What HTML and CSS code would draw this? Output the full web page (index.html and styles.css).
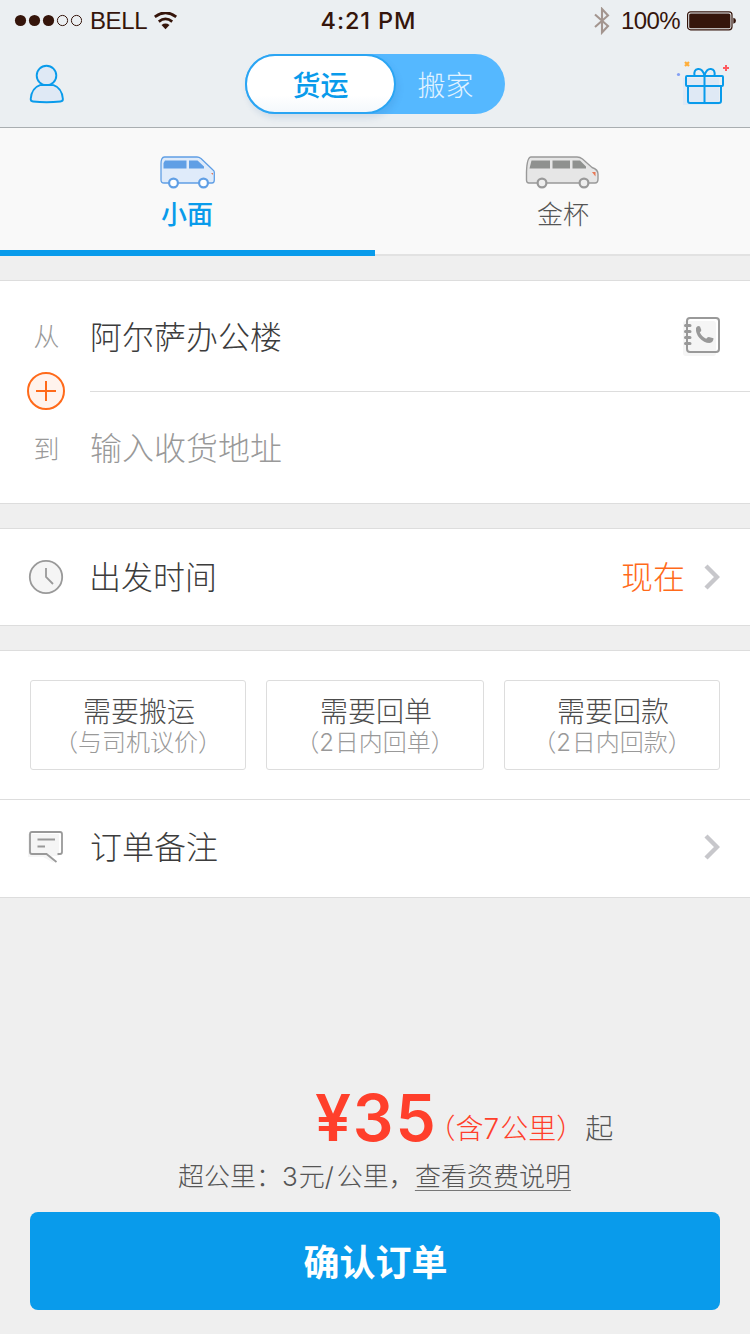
FILE: index.html
```html
<!DOCTYPE html>
<html lang="zh-CN">
<head>
<meta charset="utf-8">
<title>货运</title>
<link rel="stylesheet" href="styles.css">
</head>
<body>
<header class="header">
  <div class="status">
    <div class="status-left">
      <svg class="dots" width="68" height="14" viewBox="0 0 68 14"><g fill="#35150b"><circle cx="6.5" cy="6.500" r="5.6"/><circle cx="20.5" cy="6.500" r="5.6"/><circle cx="34.5" cy="6.500" r="5.6"/></g><g fill="none" stroke="#35150b"><circle cx="48.5" cy="6.500" r="5.1"/><circle cx="62.5" cy="6.500" r="5.1"/></g></svg>
      <span class="carrier">BELL</span>
      <svg class="wifi" width="24" height="18" viewBox="0 0 24 18"><path d="M.8 4.800Q11.500-3.200 22.200 4.800" fill="none" stroke="#35150b" stroke-width="2.800"/><path d="M4.800 9.600Q11.500 4.200 18.200 9.600" fill="none" stroke="#35150b" stroke-width="2.700"/><path d="M7.500 13Q11.500 10.200 15.500 13L11.500 17.300Z" fill="#35150b"/></svg>
    </div>
    <span class="time">4:21 PM</span>
    <div class="status-right">
      <svg class="bt" width="16" height="28" viewBox="0 0 16 28"><path d="M1 7.500 14 19 8 25.500V2L14 8.500 1 20" fill="none" stroke="#a3958f" stroke-width="2.100"/></svg>
      <span class="percent">100%</span>
      <svg class="battery" width="50" height="20" viewBox="0 0 50 20"><rect x=".6" y=".8" width="44.400" height="18" rx="3" fill="none" stroke="#35150b" stroke-width="1.200"/><rect x="2.200" y="2.400" width="41.200" height="14.800" rx="1.500" fill="#35150b"/><path d="M46.300 6.800Q49 7.500 49 9.800T46.300 12.800Z" fill="#35150b"/></svg>
    </div>
  </div>
  <div class="nav">
    <svg class="user" width="38" height="40" viewBox="0 0 38 40"><g fill="#dfe9f5" stroke="#099beb" stroke-width="1.900"><circle cx="18.500" cy="11.500" r="9.800"/><path d="M12 21.100Q3.500 24 2.700 35Q2.600 37.200 5 37.500Q18.500 39 32.400 37.500Q35 37.200 34.900 35Q34 24 25.500 21.100Q18.500 20.800 12 21.100Z"/></g></svg>
    <div class="toggle"><span class="toggle-on">货运</span><span class="toggle-off">搬家</span></div>
    <svg class="gift" width="54" height="44" viewBox="0 0 54 44"><rect x="7" y="17" width="36" height="27" fill="#dfe9f5"/><g fill="none" stroke="#099beb" stroke-width="2"><rect x="10" y="15" width="37" height="10" rx="1"/><path d="M12 25V40Q12 42 14 42H43Q45 42 45 40V25M28.500 15V42M28.500 14.500Q26.500 7.500 22 8T18.500 15M28.500 14.500Q30.500 7.500 35 8T38.500 15"/></g><path d="M9 1 13 5M13 1 9 5" stroke="#ffad38" stroke-width="2.200"/><path d="M50 4v6M47 7h6" stroke="#ff5a5f" stroke-width="2"/><circle cx="2.500" cy="13.500" r="1.600" fill="#84a0f5"/></svg>
  </div>
</header>

<nav class="tabs">
  <div class="tab tab-active">
    <svg width="56" height="34" viewBox="0 0 56 34"><path d="M5.500 2H38Q40 2 42 3.500L54 15Q55.500 16 55.300 18V25Q55.300 28 53 28H5Q2 28 2 25V9Q2 2 5.500 2Z" fill="#dfebfa" stroke="#609fe5" stroke-width="1.300"/><path d="M6 5.500H27.500V13.500H4.500V8ZM30 5.500H38.500L45 11.500V13.500H30Z" fill="#609fe5"/><path d="M52 18H54V20Z" fill="#e87754"/><g fill="#fff" stroke="#609fe5" stroke-width="2.200"><circle cx="14.500" cy="28" r="4.400"/><circle cx="44.500" cy="28" r="4.400"/></g></svg>
    <span>小面</span>
  </div>
  <div class="tab">
    <svg width="74" height="34" viewBox="0 0 74 34"><path d="M6 2H52Q55 2 57.500 4L67 12.500Q73 14.500 73 19V24Q73 28 70 28H4Q1.500 28 1.500 25V17Q2 2 6 2Z" fill="#e6e6e6" stroke="#999" stroke-width="1.400"/><path d="M6.500 5.500H25V13.500H4.500ZM27.500 5.500H45V13.500H27.500ZM47.500 5.500H55L61 11.500V13.500H47.500Z" fill="#8f918f"/><path d="M67 17H70.500V21.500Z" fill="#e87754"/><g fill="#eee" stroke="#999" stroke-width="2.200"><circle cx="17" cy="28" r="4.400"/><circle cx="59" cy="28" r="4.400"/></g></svg>
    <span>金杯</span>
  </div>
</nav>

<section class="card route">
  <svg class="plus" width="38" height="38" viewBox="0 0 38 38"><circle cx="19" cy="19" r="18" fill="#fff3ed" stroke="#ff6a1a" stroke-width="2"/><path d="M19 9V29M9 19H29" stroke="#ff6a1a" stroke-width="2"/></svg>
  <div class="row row-from">
    <span class="mark">从</span>
    <span class="label">阿尔萨办公楼</span>
    <svg class="book" width="38" height="40" viewBox="0 0 38 40"><rect x="1" y="5" width="33" height="35" rx="3" fill="#f5f5f5"/><rect x="5" y="2" width="32" height="34" rx="3" fill="none" stroke="#999" stroke-width="2"/><path d="M3.500 9.500H8M3.500 15.500H8M3.500 21.500H8M3.500 27.500H8" stroke="#999" stroke-width="3" stroke-linecap="round"/><path d="M14 12Q15.500 9 18 10.500L19.300 14Q19.500 15.300 17.800 16.200Q19.500 20.500 24.200 22.800Q25.300 21 26.700 21L31.500 22.300Q31.500 26.500 27.500 27Q22 27 17.500 22Q13.500 17.500 14 12Z" fill="#999"/></svg>
  </div>
  <div class="row row-to">
    <span class="mark">到</span>
    <span class="label placeholder">输入收货地址</span>
  </div>
</section>

<section class="card row depart">
  <span class="mark"><svg width="36" height="36" viewBox="0 0 36 36"><circle cx="18" cy="18" r="16.200" fill="#f5f5f5" stroke="#999" stroke-width="1.800"/><path d="M18 9V18L25 25" fill="none" stroke="#999" stroke-width="1.800"/></svg></span>
  <span class="label">出发时间</span>
  <span class="value">现在</span>
  <svg class="chevron" width="16" height="26" viewBox="0 0 16 26"><path d="M2 2 13 13 2 24" fill="none" stroke="#c7c7cb" stroke-width="4.400"/></svg>
</section>

<section class="card">
  <div class="options">
    <div class="option"><b>需要搬运</b><span>（与司机议价）</span></div>
    <div class="option"><b>需要回单</b><span>（<i>2</i>日内回单）</span></div>
    <div class="option"><b>需要回款</b><span>（<i>2</i>日内回款）</span></div>
  </div>
  <div class="row note">
    <span class="mark"><svg width="38" height="34" viewBox="0 0 38 34"><path d="M1 5H32V27H25L27 34L16 28H1Z" fill="#f5f5f5"/><path d="M30.500 25H33Q35 25 35 23V5Q35 3 33 3H5Q3 3 3 5V23Q3 25 5 25H19.500L29.500 33M10.500 10.500H28M10.500 17.500H18" fill="none" stroke="#999" stroke-width="1.800"/></svg></span>
    <span class="label">订单备注</span>
    <svg class="chevron" width="16" height="26" viewBox="0 0 16 26"><path d="M2 2 13 13 2 24" fill="none" stroke="#c7c7cb" stroke-width="4.400"/></svg>
  </div>
</section>

<footer class="footer">
  <div class="price"><span class="amount">¥35</span><span class="included">（含<i>7</i>公里）</span><span class="from">起</span></div>
  <div class="rate">超公里：<i>3</i>元<i class="slash">/</i>公里，<a class="link">查看资费说明</a></div>
  <div class="confirm">确认订单</div>
</footer>
</body>
</html>
```
FILE: styles.css
```css
* { box-sizing: border-box; }
body {
  margin: 0;
  height: 1334px;
  display: flex;
  flex-direction: column;
  background: #efefef;
  color: #3c3c3c;
  font-family: "Noto Sans CJK SC", sans-serif;
  font-weight: 300;
}
svg { display: block; flex: none; }
i { font-family: Inter, sans-serif; font-style: normal; letter-spacing: 1px; }

.header { height: 128px; background: #ebeff2; border-bottom: 1px solid #a9aeb1; }
.status {
  height: 41px;
  display: grid;
  grid-template-columns: 1fr auto 1fr;
  grid-template-rows: 41px;
  align-items: center;
  padding: 0 14px;
  color: #35150b;
  font: 24px/41px "Liberation Sans", Arial, sans-serif;
}
.status-left, .status-right { display: flex; align-items: center; }
.status-right { justify-content: flex-end; margin-right: -1px; }
.carrier { margin-left: 8px; letter-spacing: -.4px; }
.wifi { margin-left: 7px; }
.time { font-family: Inter, sans-serif; font-weight: 500; font-size: 23.5px; line-height: 43px; letter-spacing: .9px; margin-left: -13px; }
.bt { margin-right: -1px; }
.percent { margin: 0 7px 0 12px; letter-spacing: -.6px; }
.nav { height: 86px; display: flex; align-items: center; justify-content: space-between; padding: 0 20px 0 28px; }
.toggle {
  display: flex;
  width: 260px;
  height: 60px;
  border-radius: 30px;
  background: #55b8ff;
  font-size: 28px;
  line-height: 56px;
  text-align: center;
  margin-left: 8px;
}
.toggle-on {
  width: 151px;
  border: 2px solid #2ba5f3;
  border-radius: 30px;
  background: linear-gradient(#fff 70%, #f4f8fc);
  box-shadow: 2px 4px 6px rgba(40, 100, 160, .14);
  color: #099beb;
  font-weight: 500;
}
.toggle-off { width: 99px; color: #e2f3ff; line-height: 60px; }
.gift { margin-bottom: 3px; }
.user { margin-bottom: 1px; }

.tabs { height: 128px; display: grid; grid-template-columns: 1fr 1fr; background: #f9f9f9; }
.tab {
  display: flex;
  flex-direction: column;
  align-items: center;
  padding-top: 27px;
  border-bottom: 2px solid #e2e2e2;
  color: #555;
  font-size: 26px;
  line-height: 48px;
}
.tab svg { margin-right: 2px; }
.tab span { margin-left: 1px; }
.tab-active { border-bottom: 6px solid #099beb; color: #099beb; font-weight: 500; }
.tab-active span { margin-left: -1px; line-height: 47px; }

.card { margin-top: 24px; background: #fff; border: solid #ddd; border-width: 1px 0; position: relative; flex: none; }
.row { display: flex; align-items: center; padding-right: 30px; }
.mark { width: 90px; padding-left: 3px; display: flex; justify-content: center; color: #999; font-size: 26px; }
.mark svg { margin-right: 1px; }
.label { flex: 1; font-size: 32px; line-height: 48px; }
.placeholder { color: #999; }
.route { height: 224px; }
.row-from { height: 110px; }
.row-from .label { padding-bottom: 3px; }
.row-from .mark { padding-bottom: 4px; }
.row-to { height: 112px; background: linear-gradient(#ddd, #ddd) 90px 0 / 660px 1px no-repeat; }
.row-to .label { padding-bottom: 2px; }
.plus { position: absolute; left: 27px; top: 91px; z-index: 1; }
.depart { height: 98px; }
.depart .label, .depart .value { padding-bottom: 4px; }
.depart .label { text-indent: -1px; }
.value { color: #ff6a1a; font-size: 32px; margin-right: 19px; }

.options {
  display: grid;
  grid-template-columns: 216px 218px 216px;
  gap: 20px;
  padding: 29px 30px;
  height: 149px;
  border-bottom: 1px solid #ddd;
}
.option {
  display: flex;
  flex-direction: column;
  align-items: center;
  height: 90px;
  padding-top: 13px;
  border: 1px solid #ddd;
  border-radius: 3px;
  white-space: nowrap;
}
.option b { font-weight: 300; font-size: 28px; line-height: 32px; color: #4c4c4c; padding-left: 2px; }
.option span { font-size: 24px; line-height: 30px; color: #999; }
.option i { letter-spacing: 1px; }
.note { height: 97px; }
.note .label { padding-bottom: 7px; }
.note .mark { padding-bottom: 5px; }
.note .chevron { margin-bottom: 4px; }

.footer { margin-top: auto; padding: 0 30px 24px; }
.price { display: flex; align-items: baseline; height: 61px; line-height: 64px; padding-left: 285px; white-space: nowrap; font-size: 28px; }
.amount { font-family: Inter, sans-serif; font-weight: 600; font-size: 64px; letter-spacing: 1.8px; color: #ff3f2b; }
.included, .from { position: relative; top: -2px; }
.included { color: #ff3f2b; font-feature-settings: "halt"; margin: 0 15px 0 4px; }
.from { color: #555; }
.rate { margin: 4px 0 11px 148px; font-size: 26px; line-height: 48px; color: #555; white-space: nowrap; }
.link { text-decoration: underline; text-decoration-color: #777; text-decoration-thickness: 1px; text-underline-offset: 4px; }
.slash { letter-spacing: 3px; }
.confirm { height: 98px; border-radius: 8px; background: #099beb; color: #fff; font-size: 36px; font-weight: 700; line-height: 97px; text-align: center; text-indent: 1px; }
```
